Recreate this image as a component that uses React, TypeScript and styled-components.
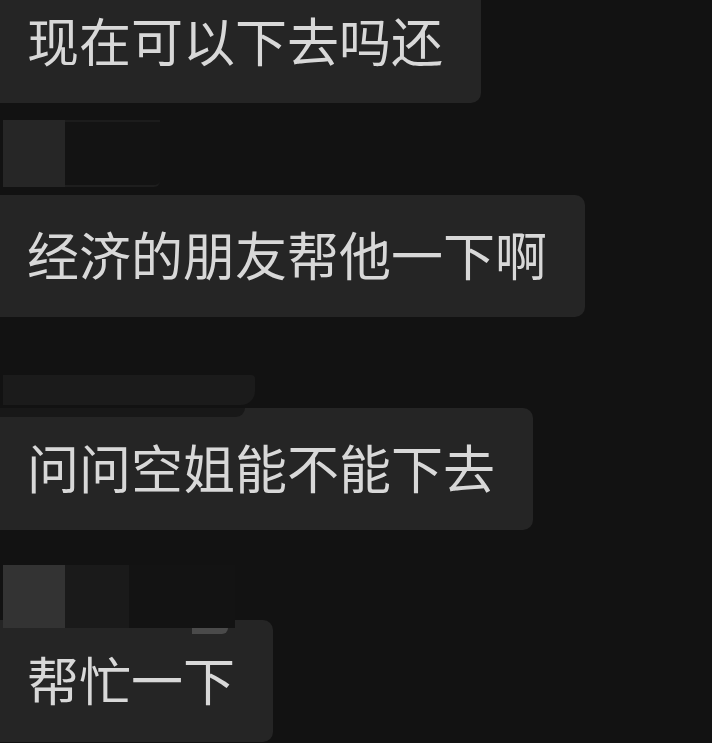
import React from "react";
import styled, { createGlobalStyle } from "styled-components";

const GlobalStyle = createGlobalStyle`
  html {
    overflow: hidden;
    background: #121212;
  }
  body {
    margin: 0;
    padding: 0;
    background: #121212;
  }
`;

type Message = {
  text: string;
};

const messages: Message[] = [
  { text: "现在可以下去吗还" },
  { text: "经济的朋友帮他一下啊" },
  { text: "问问空姐能不能下去" },
  { text: "帮忙一下" },
];

const App = () => {
  return (
    <Root>
      <GlobalStyle />
      <Bubble>{messages[0].text}</Bubble>

      <SenderRow $height={92} $top={17}>
        <Avatar $color="#262626" $width={62} $tall={67} />
        <NameBar $width={95} $tall={67} />
      </SenderRow>

      <Bubble>{messages[1].text}</Bubble>

      <SenderRow $height={91} $top={58}>
        <Smear />
      </SenderRow>

      <Bubble>
        <TopSmear />
        {messages[2].text}
      </Bubble>

      {/* blurred sender block sits a few px over the last bubble */}
      <SenderRow $height={98} $top={35} $overlap={8}>
        <Avatar $color="#333333" $width={62} $tall={63} />
        <Avatar $color="#1a1a1a" $width={64} $tall={63} />
        <Avatar $color="#131313" $width={106} $tall={63} />
      </SenderRow>

      <Bubble>
        <GreyPatch />
        {messages[3].text}
      </Bubble>
    </Root>
  );
};

export default App;

const Root = styled.div`
  display: flex;
  flex-direction: column;
  align-items: flex-start;
  width: 712px;
  min-height: 762px;
  margin-top: -19px;
  background: #121212;
`;

const Bubble = styled.div`
  position: relative;
  flex-shrink: 0;
  display: flex;
  align-items: center;
  height: 122px;
  box-sizing: border-box;
  padding: 0 38px 4px 27px;
  border-radius: 0 10px 10px 0;
  background: #252525;
  color: #d8d8d8;
  font-family: "Noto Sans CJK SC", "Noto Sans", sans-serif;
  font-size: 52px;
  font-weight: 400;
  line-height: 1;
  white-space: nowrap;
`;

const SenderRow = styled.div<{ $height: number; $top: number; $overlap?: number }>`
  position: relative;
  z-index: 1;
  flex-shrink: 0;
  display: flex;
  align-items: flex-start;
  height: ${p => p.$height}px;
  box-sizing: border-box;
  padding: ${p => p.$top}px 0 0 3px;
  margin-bottom: ${p => -(p.$overlap || 0)}px;
`;

const Avatar = styled.div<{ $color: string; $width: number; $tall: number }>`
  width: ${p => p.$width}px;
  height: ${p => p.$tall}px;
  background: ${p => p.$color};
`;

const NameBar = styled.div<{ $width: number; $tall: number }>`
  width: ${p => p.$width}px;
  height: ${p => p.$tall}px;
  box-sizing: border-box;
  background: #131313;
  border-top: 2px solid #1c1c1c;
  border-bottom: 2px solid #1e1e1e;
  border-radius: 0 0 6px 0;
`;

const Smear = styled.div`
  width: 252px;
  height: 30px;
  background: #1b1b1b;
  border-radius: 0 4px 14px 0;
`;

const TopSmear = styled.div`
  position: absolute;
  top: 0;
  left: 0;
  width: 245px;
  height: 9px;
  background: #181818;
  border-radius: 0 0 14px 0;
`;

const GreyPatch = styled.div`
  position: absolute;
  top: 8px;
  left: 192px;
  width: 36px;
  height: 6px;
  background: #4a4a4a;
  border-radius: 0 0 8px 0;
`;
